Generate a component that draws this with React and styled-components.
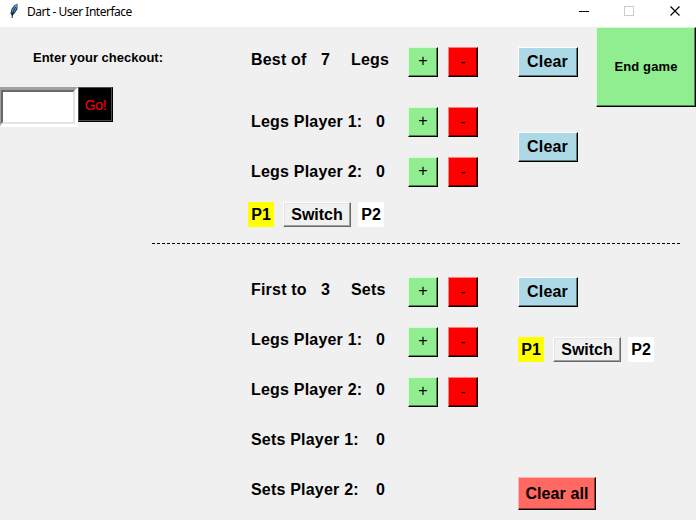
import React from "react";
import styled, { createGlobalStyle } from "styled-components";

const GlobalStyle = createGlobalStyle`
  * { box-sizing: border-box; }
  body { margin: 0; background: #f0f0f0; overflow: hidden; }
  button, input { font: inherit; margin: 0; padding: 0; border-radius: 0; outline: none; }
`;

const Window = styled.div`
  width: 696px;
  height: 520px;
  display: flex;
  flex-direction: column;
  overflow: hidden;
  background: #f0f0f0;
  color: #000;
  font: bold 16px/25px "Liberation Sans", Arial, sans-serif;
  white-space: pre;
`;

const TitleBar = styled.header`
  flex: none;
  height: 27px;
  display: flex;
  background: #fff;
  font: 12px/24px "Noto Sans", "Open Sans", sans-serif;
`;

const Feather = styled.svg`
  width: 12px;
  height: 18px;
  margin: 2px 7px 0 8px;
`;

const Caption = styled.span`
  letter-spacing: -0.49px;
`;

const WindowControls = styled.svg`
  width: 138px;
  height: 27px;
  margin-left: auto;
`;

const Body = styled.main`
  flex: 1;
  display: flex;
`;

const Sidebar = styled.aside`
  width: 152px;
  padding-top: 18px;
`;

const Prompt = styled.div`
  padding-left: 33px;
  font-size: 13px;
`;

const CheckoutForm = styled.div`
  display: flex;
  align-items: flex-start;
  margin-top: 17px;
`;

const EntryFrame = styled.div`
  width: 78px;
  height: 40px;
  border: 3px solid;
  border-left-width: 1px;
  border-color: #a0a0a0 #fff #fff #a0a0a0;
`;

const Entry = styled.input`
  display: block;
  width: 100%;
  height: 100%;
  border: 2px solid;
  border-color: #696969 #e3e3e3 #e3e3e3 #696969;
  background: #fff;
`;

const BevelButton = styled.button`
  flex: none;
  width: ${(p) => p.$w}px;
  height: ${(p) => p.$h}px;
  border: 1px solid;
  border-color: ${(p) => p.$light} #000 #000 ${(p) => p.$light};
  box-shadow: inset -1px -1px ${(p) => p.$shade};
  background: ${(p) => p.$bg};
  line-height: 28px;
  text-align: center;
`;

const GoButton = styled(BevelButton).attrs({ $w: 35, $h: 35, $bg: "#000", $light: "#4c4c4c", $shade: "#4c4c4c" })`
  color: #f00;
  font-size: 14px;
  font-weight: normal;
  letter-spacing: -0.3px;
`;

const StepButton = styled(BevelButton).attrs({ $w: 30, $h: 30 })`
  padding-bottom: ${(p) => p.$lift ?? 0}px;
  font-weight: normal;
  line-height: 26px;
`;

const ClearButton = styled(BevelButton).attrs({
  $w: 60, $h: 30, $bg: "#add8e6", $light: "#fff", $shade: "#5f7880",
})`
  padding-right: 1px;
  letter-spacing: 0.2px;
`;

const ClearAllButton = styled(BevelButton).attrs({
  $w: 78, $h: 33, $bg: "#ff6961", $light: "#ffb4b0", $shade: "#8c3a36",
})`
  letter-spacing: 0.1px;
`;

const EndButton = styled(BevelButton).attrs({
  $w: 100, $h: 80, $bg: "#90ee90", $light: "#d5fad5", $shade: "#4f834f",
})`
  margin-left: auto;
  font-size: 13px;
  letter-spacing: 0.1px;
`;

const Main = styled.div`
  width: 544px;
`;

const Section = styled.section`
  display: flex;
  height: ${(p) => p.$h}px;
  padding-left: 96px;
`;

const Divider = styled.div`
  width: 529px;
  height: 1px;
  background: repeating-linear-gradient(90deg, #000 0 3px, transparent 3px 5px);
`;

const Scores = styled.div`
  width: 230px;
  padding-top: ${(p) => p.$top}px;
`;

const ScoreRow = styled.div`
  display: flex;
  height: 30px;
  margin-bottom: ${(p) => p.$gap ?? 20}px;
  padding-left: 3px;
`;

const Label = styled.span`
  width: ${(p) => p.$w}px;
  padding-top: ${(p) => p.$drop ?? 0}px;
  letter-spacing: 0.2px;
`;

const Steps = styled.div`
  display: flex;
  gap: 10px;
  margin-left: auto;
`;

const Actions = styled.div`
  display: flex;
  flex-direction: column;
  align-items: flex-start;
  gap: ${(p) => p.$gap}px;
  margin-left: 40px;
  padding-top: ${(p) => p.$top}px;
`;

const PlayerSwitch = styled.div`
  display: flex;
  height: 25px;
  margin-top: ${(p) => p.$top ?? 0}px;
`;

const ClearAllRow = styled.div`
  display: flex;
  margin-top: 85px;
`;

const PlayerTag = styled.span`
  width: 26px;
  height: 25px;
  background: ${(p) => (p.$active ? "#ff0" : "#fff")};
  text-align: center;
`;

const SwitchButton = styled(BevelButton)`
  margin: 0 7px 0 9px;
  border-color: #fff #696969 #696969 #fff;
  box-shadow: inset -1px -1px #a0a0a0, inset 1px 1px #e3e3e3;
  line-height: 23px;
`;

function PlusMinus() {
  return (
    <Steps>
      <StepButton $bg="#90ee90" $light="#d5fad5" $shade="#4f834f" $lift={2}>+</StepButton>
      <StepButton $bg="#f00" $light="#ff8080" $shade="#800000">-</StepButton>
    </Steps>
  );
}

function Target({ prefix, value, unit, gap }) {
  return (
    <ScoreRow $gap={gap}>
      <Label $w={70}>{prefix}</Label>
      <Label $w={30}>{value}</Label>
      <Label>{unit}</Label>
      <PlusMinus />
    </ScoreRow>
  );
}

function Score({ name, steps, drop }) {
  return (
    <ScoreRow>
      <Label $w={125} $drop={drop}>{name}</Label>
      <Label $drop={drop}>0</Label>
      {steps && <PlusMinus />}
    </ScoreRow>
  );
}

function Switcher({ top }) {
  return (
    <PlayerSwitch $top={top}>
      <PlayerTag $active>P1</PlayerTag>
      <SwitchButton $w={68} $h={25} $bg="#f0f0f0">Switch</SwitchButton>
      <PlayerTag>P2</PlayerTag>
    </PlayerSwitch>
  );
}

export default function App() {
  return (
    <>
      <GlobalStyle />
      <Window>
        <TitleBar>
          <Feather viewBox="0 0 12 18">
            <path d="M9.5 1.5 6 3.5 3.5 7 2.5 11.5 4 14 7 11 9.5 7Z" fill="#1c3554" />
            <path d="M9 2 6.5 4 4.2 8 3.8 11.5 6.5 10 8.6 6Z" fill="#5ba0df" />
            <path d="M7.5 5 5 10 4.5 13 4 16" fill="none" stroke="#111" strokeWidth="0.9" />
          </Feather>
          <Caption>Dart - User Interface</Caption>
          <WindowControls viewBox="0 0 138 27" fill="none" shapeRendering="crispEdges">
            <path d="M21 11.5h10" stroke="#000" />
            <path d="M66.5 6.5h9v9h-9z" stroke="#ccc" />
            <path d="m112.5 6.5 9 9m0-9-9 9" stroke="#000" strokeWidth="1.2" shapeRendering="auto" />
          </WindowControls>
        </TitleBar>
        <Body>
          <Sidebar>
            <Prompt>Enter your checkout:</Prompt>
            <CheckoutForm>
              <EntryFrame><Entry /></EntryFrame>
              <GoButton>Go!</GoButton>
            </CheckoutForm>
          </Sidebar>
          <Main>
            <Section $h={216}>
              <Scores $top={20}>
                <Target prefix="Best of" value="7" unit="Legs" gap={30} />
                <Score name="Legs Player 1:" steps drop={2} />
                <Score name="Legs Player 2:" steps drop={2} />
                <Switcher top={-5} />
              </Scores>
              <Actions $top={20} $gap={55}>
                <ClearButton>Clear</ClearButton>
                <ClearButton>Clear</ClearButton>
              </Actions>
              <EndButton>End game</EndButton>
            </Section>
            <Divider />
            <Section $h={276}>
              <Scores $top={33}>
                <Target prefix="First to" value="3" unit="Sets" />
                <Score name="Legs Player 1:" steps />
                <Score name="Legs Player 2:" steps />
                <Score name="Sets Player 1:" />
                <Score name="Sets Player 2:" />
              </Scores>
              <Actions $top={33} $gap={30}>
                <ClearButton>Clear</ClearButton>
                <Switcher />
                <ClearAllRow>
                  <ClearAllButton>Clear all</ClearAllButton>
                </ClearAllRow>
              </Actions>
            </Section>
          </Main>
        </Body>
      </Window>
    </>
  );
}
